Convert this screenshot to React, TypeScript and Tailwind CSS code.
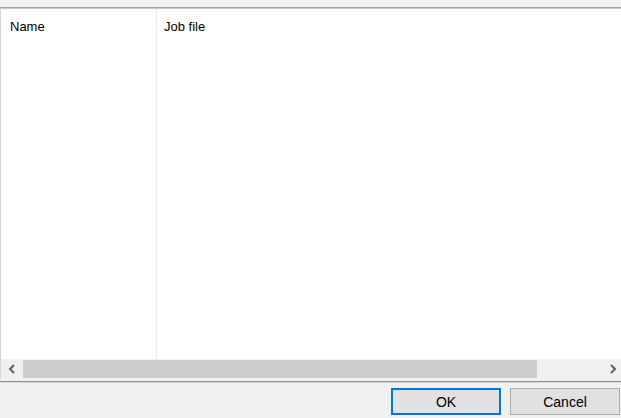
import React from "react";

const ChevronLeft = () => (
  <svg width="8" height="10" viewBox="0 0 8 10" className="text-[#606060]">
    <path d="M6 1 L2 5 L6 9" fill="none" stroke="currentColor" strokeWidth="2" />
  </svg>
);

const ChevronRight = () => (
  <svg width="8" height="10" viewBox="0 0 8 10" className="text-[#606060]">
    <path d="M2 1 L6 5 L2 9" fill="none" stroke="currentColor" strokeWidth="2" />
  </svg>
);

const App = () => {
  return (
    <div className="w-[621px] h-[418px] flex flex-col bg-[#f0f0f0] text-[#000] font-['Liberation_Sans',Arial,sans-serif] overflow-hidden">
      {/* top strip */}
      <div className="h-[7px] shrink-0 bg-[#f0f0f0]" />
      <div className="h-[1px] shrink-0 bg-[#a0a0a0]" />
      <div className="h-[1px] shrink-0 bg-[#c8c8c8]" />

      {/* list view */}
      <div className="flex-1 min-h-0 flex border-l border-[#d4d4d4] bg-white">
        <div className="w-[156px] border-r border-[#e3ecf7] pl-[9px] pt-[10px] text-[13px] leading-[16px]">
          Name
        </div>
        <div className="flex-1 pl-[7px] pt-[10px] text-[13px] leading-[16px]">
          Job file
        </div>
      </div>

      {/* horizontal scrollbar */}
      <div className="h-[20px] shrink-0 flex bg-[#f0f0f0] border-l border-[#d4d4d4]">
        <div className="w-[22px] flex items-center justify-center">
          <ChevronLeft />
        </div>
        <div className="w-[514px] my-[1px] bg-[#cdcdcd]" />
        <div className="flex-1" />
        <div className="w-[17px] flex items-center justify-center">
          <ChevronRight />
        </div>
      </div>

      <div className="h-[2px] shrink-0 bg-[#f0f0f0]" />
      <div className="h-[1px] shrink-0 bg-[#8f8f9c]" />
      <div className="h-[1px] shrink-0 bg-[#d8d8d8]" />

      {/* buttons */}
      <div className="h-[35px] shrink-0 flex justify-end gap-[9px] pt-[5px] pr-[1px]">
        <button className="w-[110px] h-[27px] bg-[#e1e1e1] border-2 border-[#0078d7] text-[14px] leading-none">
          OK
        </button>
        <button className="w-[110px] h-[27px] bg-[#e1e1e1] border border-[#adadad] text-[14px] leading-none">
          Cancel
        </button>
      </div>
    </div>
  );
};

export default App;
